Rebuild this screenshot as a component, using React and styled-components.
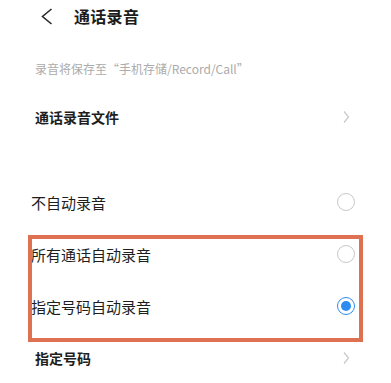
import React from "react";
import styled, { createGlobalStyle } from "styled-components";

const GlobalStyle = createGlobalStyle`
  body {
    margin: 0;
    background: #ffffff;
    font-family: "Noto Sans CJK SC", "Noto Sans", sans-serif;
  }
`;

const Page = styled.div`
  width: 391px;
  height: 383px;
  overflow: hidden;
  background: #ffffff;
`;

const Header = styled.div`
  display: flex;
  align-items: center;
  height: 32px;
  padding-left: 41px;
  gap: 21px;
`;

const Title = styled.h1`
  margin: 0;
  font-size: 16px;
  font-weight: 700;
  color: #1c1c1c;
  letter-spacing: 0.3px;
`;

const Caption = styled.p`
  margin: 0;
  padding: 29px 33px 14px 35px;
  font-size: 12px;
  line-height: 16px;
  color: #ababab;
`;

const Row = styled.div`
  display: flex;
  align-items: center;
  justify-content: space-between;
  height: 52px;
  padding: 0 36px 0 ${(p) => (p.$bold ? 35 : 31)}px;
`;

const Label = styled.span`
  font-size: ${(p) => (p.$bold ? 14 : 15)}px;
  font-weight: ${(p) => (p.$bold ? 600 : 400)};
  color: #1e1e1e;
`;

const Slot = styled.span`
  display: flex;
  align-items: center;
  justify-content: center;
  width: 18px;
  height: 18px;
`;

const Radio = styled.span`
  box-sizing: border-box;
  display: flex;
  align-items: center;
  justify-content: center;
  width: 18px;
  height: 18px;
  border-radius: 50%;
  border: ${(p) => (p.$on ? "1.6px solid #2d8cf0" : "1.2px solid #c9c9c9")};
  &::after {
    content: "";
    display: ${(p) => (p.$on ? "block" : "none")};
    width: 10px;
    height: 10px;
    border-radius: 50%;
    background: #2d8cf0;
  }
`;

const Spacer = styled.div`
  height: 33px;
`;

const Group = styled.div`
  position: relative;
`;

const Highlight = styled.div`
  position: absolute;
  box-sizing: border-box;
  left: 28px;
  top: 7px;
  width: 335px;
  height: 107px;
  border: 4px solid #df7153;
  pointer-events: none;
`;

function Chevron() {
  return (
    <Slot>
      <svg width="8" height="14" viewBox="0 0 8 14">
        <polyline points="2,1.5 6.5,7 2,12.5" fill="none" stroke="#c8c8c8" strokeWidth="1.2" />
      </svg>
    </Slot>
  );
}

function BackIcon() {
  return (
    <svg width="12" height="17" viewBox="0 0 12 17">
      <polyline points="10.5,1 1.5,8.5 10.5,16" fill="none" stroke="#2a2a2a" strokeWidth="1.6" />
    </svg>
  );
}

export default function App() {
  return (
    <Page>
      <GlobalStyle />
      <Header>
        <BackIcon />
        <Title>通话录音</Title>
      </Header>
      <Caption>录音将保存至“手机存储/Record/Call”</Caption>
      <Row $bold>
        <Label $bold>通话录音文件</Label>
        <Chevron />
      </Row>
      <Spacer />
      <Row>
        <Label>不自动录音</Label>
        <Slot><Radio /></Slot>
      </Row>
      <Group>
        <Row>
          <Label>所有通话自动录音</Label>
          <Slot><Radio /></Slot>
        </Row>
        <Row>
          <Label>指定号码自动录音</Label>
          <Slot><Radio $on /></Slot>
        </Row>
        <Highlight />
      </Group>
      <Row $bold>
        <Label $bold>指定号码</Label>
        <Chevron />
      </Row>
    </Page>
  );
}
